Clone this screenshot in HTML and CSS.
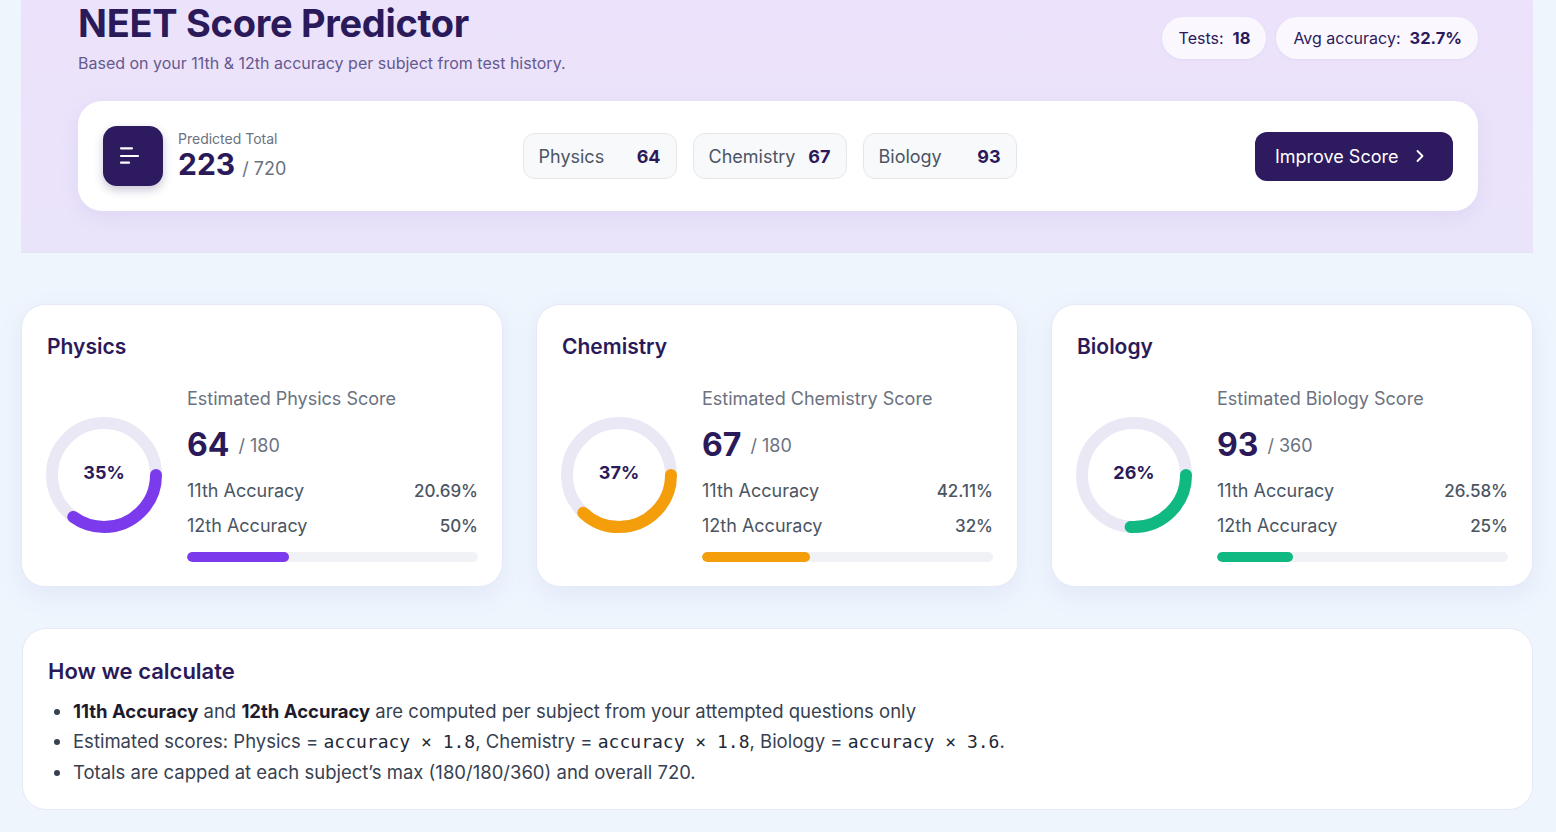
FILE: index.html
```html
<!DOCTYPE html>
<html>
<head>
<meta charset="utf-8">
<link rel="stylesheet" href="styles.css">
</head>
<body>
<div class="page">
  <header class="hero">
    <div class="hero-top">
      <div class="hero-text">
        <h1 class="title">NEET Score Predictor</h1>
        <p class="subtitle">Based on your 11th &amp; 12th accuracy per subject from test history.</p>
      </div>
      <div class="pills">
        <div class="pill">Tests: <b>18</b></div>
        <div class="pill">Avg accuracy: <b>32.7%</b></div>
      </div>
    </div>
    <div class="summary">
      <div class="total">
        <div class="total-icon">
          <svg width="28" height="28" viewBox="0 0 28 28"><g stroke="#fff" stroke-width="2.2" stroke-linecap="round"><line x1="2" y1="6.3" x2="13" y2="6.3"/><line x1="2" y1="14" x2="19" y2="14"/><line x1="2" y1="20.7" x2="10" y2="20.7"/></g></svg>
        </div>
        <div class="total-text">
          <div class="total-label">Predicted Total</div>
          <div class="total-value"><b>223</b><span>/ 720</span></div>
        </div>
      </div>
      <div class="chips">
        <div class="chip"><span>Physics</span><b>64</b></div>
        <div class="chip"><span>Chemistry</span><b>67</b></div>
        <div class="chip"><span>Biology</span><b>93</b></div>
      </div>
      <button class="improve">Improve Score
        <svg width="16" height="16" viewBox="0 0 16 16"><polyline points="5.5,3 10.5,8 5.5,13" fill="none" stroke="#fff" stroke-width="1.8" stroke-linecap="round" stroke-linejoin="round"/></svg>
      </button>
    </div>
  </header>

  <section class="subjects">
    <div class="card">
      <h2 class="card-title">Physics</h2>
      <div class="card-body">
        <div class="donut">
          <svg width="116" height="116" viewBox="0 0 116 116"><circle cx="58" cy="58" r="52" fill="none" stroke="#ebe8f6" stroke-width="12"/><circle cx="58" cy="58" r="52" fill="none" stroke="#7c3aed" stroke-width="12" stroke-linecap="round" stroke-dasharray="114.4 400"/></svg>
          <span class="donut-label">35%</span>
        </div>
        <div class="stats">
          <div class="est">Estimated Physics Score</div>
          <div class="score"><b>64</b><span>/ 180</span></div>
          <div class="row"><span>11th Accuracy</span><em>20.69%</em></div>
          <div class="row"><span>12th Accuracy</span><em>50%</em></div>
          <div class="bar"><div class="fill purple" style="width:35%"></div></div>
        </div>
      </div>
    </div>
    <div class="card">
      <h2 class="card-title">Chemistry</h2>
      <div class="card-body">
        <div class="donut">
          <svg width="116" height="116" viewBox="0 0 116 116"><circle cx="58" cy="58" r="52" fill="none" stroke="#ebe8f6" stroke-width="12"/><circle cx="58" cy="58" r="52" fill="none" stroke="#f59e0b" stroke-width="12" stroke-linecap="round" stroke-dasharray="120.9 400"/></svg>
          <span class="donut-label">37%</span>
        </div>
        <div class="stats">
          <div class="est">Estimated Chemistry Score</div>
          <div class="score"><b>67</b><span>/ 180</span></div>
          <div class="row"><span>11th Accuracy</span><em>42.11%</em></div>
          <div class="row"><span>12th Accuracy</span><em>32%</em></div>
          <div class="bar"><div class="fill orange" style="width:37%"></div></div>
        </div>
      </div>
    </div>
    <div class="card">
      <h2 class="card-title">Biology</h2>
      <div class="card-body">
        <div class="donut">
          <svg width="116" height="116" viewBox="0 0 116 116"><circle cx="58" cy="58" r="52" fill="none" stroke="#ebe8f6" stroke-width="12"/><circle cx="58" cy="58" r="52" fill="none" stroke="#10b981" stroke-width="12" stroke-linecap="round" stroke-dasharray="85 400"/></svg>
          <span class="donut-label">26%</span>
        </div>
        <div class="stats">
          <div class="est">Estimated Biology Score</div>
          <div class="score"><b>93</b><span>/ 360</span></div>
          <div class="row"><span>11th Accuracy</span><em>26.58%</em></div>
          <div class="row"><span>12th Accuracy</span><em>25%</em></div>
          <div class="bar"><div class="fill green" style="width:26%"></div></div>
        </div>
      </div>
    </div>
  </section>

  <section class="how">
    <h2 class="how-title">How we calculate</h2>
    <ul class="how-list">
      <li><b>11th Accuracy</b> and <b>12th Accuracy</b> are computed per subject from your attempted questions only</li>
      <li>Estimated scores: Physics = <code>accuracy × 1.8</code>, Chemistry = <code>accuracy × 1.8</code>, Biology = <code>accuracy × 3.6</code>.</li>
      <li>Totals are capped at each subject’s max (180/180/360) and overall 720.</li>
    </ul>
  </section>
</div>
</body>
</html>
```

FILE: styles.css
```css
* { box-sizing: border-box; }
html, body { margin: 0; padding: 0; }
body {
  background: #eff5fd;
  font-family: "Inter", "Noto Sans", sans-serif;
  color: #2b1a5a;
  width: 1556px;
  height: 832px;
  overflow: hidden;
}
.page {
  padding: 0 23px 0 21px;
}
.hero {
  background: linear-gradient(180deg, #ece2fb 0%, #eae4fa 100%);
  border-bottom: 1px solid #e2e4f5;
  padding: 0 55px 41px 57px;
  height: 253px;
}
.hero-top {
  display: flex;
  justify-content: space-between;
  align-items: flex-start;
}
.title {
  margin: 0;
  font-size: 38px;
  line-height: 46px;
  font-weight: 700;
  color: #2b1a5a;
  letter-spacing: -0.3px;
}
.subtitle {
  margin: 6px 0 0;
  font-size: 16px;
  line-height: 22px;
  color: #65598f;
}
.pills {
  display: flex;
  gap: 10px;
  margin-top: 17px;
}
.pill {
  height: 42px;
  padding: 0 16px 0 17px;
  border-radius: 21px;
  background: #faf7fe;
  box-shadow: 0 1px 3px rgba(120, 100, 180, 0.08);
  display: flex;
  align-items: center;
  gap: 9px;
  font-size: 16px;
  color: #2b1a5a;
}
.pill b { font-weight: 700; font-size: 16.5px; }
.summary {
  margin-top: 27px;
  height: 110px;
  background: #fff;
  border-radius: 24px;
  padding: 0 25px;
  display: flex;
  align-items: center;
  justify-content: space-between;
  box-shadow: 0 6px 20px rgba(130, 110, 200, 0.10);
}
.total {
  display: flex;
  align-items: center;
  gap: 15px;
  width: 181px;
  white-space: nowrap;
}
.total-icon {
  width: 60px;
  height: 60px;
  flex: none;
  border-radius: 14px;
  background: #2e1a5f;
  display: flex;
  align-items: center;
  justify-content: center;
  box-shadow: 0 4px 10px rgba(46, 26, 95, 0.25);
}
.total-text { padding-top: 3px; }
.total-label {
  font-size: 14px;
  line-height: 18px;
  color: #6b7280;
}
.total-value {
  display: flex;
  align-items: baseline;
  gap: 7px;
  line-height: 32px;
}
.total-value b {
  font-size: 30px;
  font-weight: 700;
  color: #2b1a5a;
}
.total-value span {
  font-size: 18px;
  color: #6b7280;
}
.chips {
  display: flex;
  gap: 16px;
}
.chip {
  width: 154px;
  height: 46px;
  border-radius: 12px;
  border: 1px solid #e5e7eb;
  background: #f8f9fb;
  display: flex;
  align-items: center;
  justify-content: space-between;
  padding: 0 15px 0 15px;
  font-size: 18px;
}
.chip span { color: #4b5563; }
.chip b { color: #2b1a5a; font-weight: 700; font-size: 18px; }
.improve {
  width: 198px;
  height: 49px;
  border: 0;
  border-radius: 12px;
  background: #2e1a5f;
  color: #fff;
  font-family: inherit;
  font-size: 18px;
  display: flex;
  align-items: center;
  padding: 0 0 0 20px;
  gap: 14px;
}
.subjects {
  margin-top: 51px;
  display: grid;
  grid-template-columns: repeat(3, 1fr);
  gap: 33px;
}
.card {
  height: 283px;
  background: #fff;
  border-radius: 24px;
  border: 1px solid #e6eaf8;
  box-shadow: 0 8px 24px rgba(110, 130, 210, 0.10);
  padding: 29px 24px 0 25px;
}
.card-title {
  margin: 0;
  font-size: 21px;
  line-height: 26px;
  font-weight: 600;
  color: #2b1a5a;
}
.card-body {
  display: flex;
  align-items: center;
  gap: 25px;
  margin-top: 27px;
}
.donut {
  position: relative;
  width: 116px;
  height: 116px;
  flex: none;
  margin-left: -1px;
}
.donut svg { display: block; }
.donut-label {
  position: absolute;
  inset: 0;
  display: flex;
  align-items: center;
  justify-content: center;
  font-size: 18px;
  font-weight: 700;
  color: #2b1a5a;
  padding-bottom: 4px;
}
.stats { flex: 1; }
.est {
  font-size: 18px;
  line-height: 24px;
  color: #6b7280;
}
.score {
  margin-top: 13px;
  display: flex;
  align-items: center;
  gap: 9px;
  line-height: 40px;
}
.score b {
  font-size: 32px;
  font-weight: 700;
  color: #2b1a5a;
}
.score span {
  font-size: 18px;
  color: #6b7280;
  padding-top: 2px;
}
.row {
  display: flex;
  justify-content: space-between;
  align-items: center;
  line-height: 28px;
  font-size: 18px;
  color: #4b5563;
  margin-top: 7px;
}
.score + .row { margin-top: 11px; }
.row em {
  font-style: normal;
  font-size: 17px;
  font-weight: 500;
}
.bar {
  margin-top: 12px;
  height: 10px;
  border-radius: 5px;
  background: #f1f2f5;
  overflow: hidden;
}
.fill { height: 100%; border-radius: 5px; }
.purple { background: #7c3aed; }
.orange { background: #f59e0b; }
.green { background: #10b981; }
.how {
  margin: 41px 0 0 1px;
  height: 182px;
  background: #fff;
  border-radius: 24px;
  border: 1px solid #e6eaf8;
  padding: 29px 26px 0 25px;
}
.how-title {
  margin: 0;
  font-size: 22px;
  line-height: 26px;
  font-weight: 600;
  color: #2b1a5a;
}
.how-list {
  margin: 12px 0 0;
  padding-left: 25px;
  font-size: 18.5px;
  line-height: 30px;
  color: #374151;
}
.how-list b { font-weight: 700; color: #1f1b2e; }
.how-list code {
  font-family: "DejaVu Sans Mono", monospace;
  font-size: 18px;
  color: #1f2937;
}
```
